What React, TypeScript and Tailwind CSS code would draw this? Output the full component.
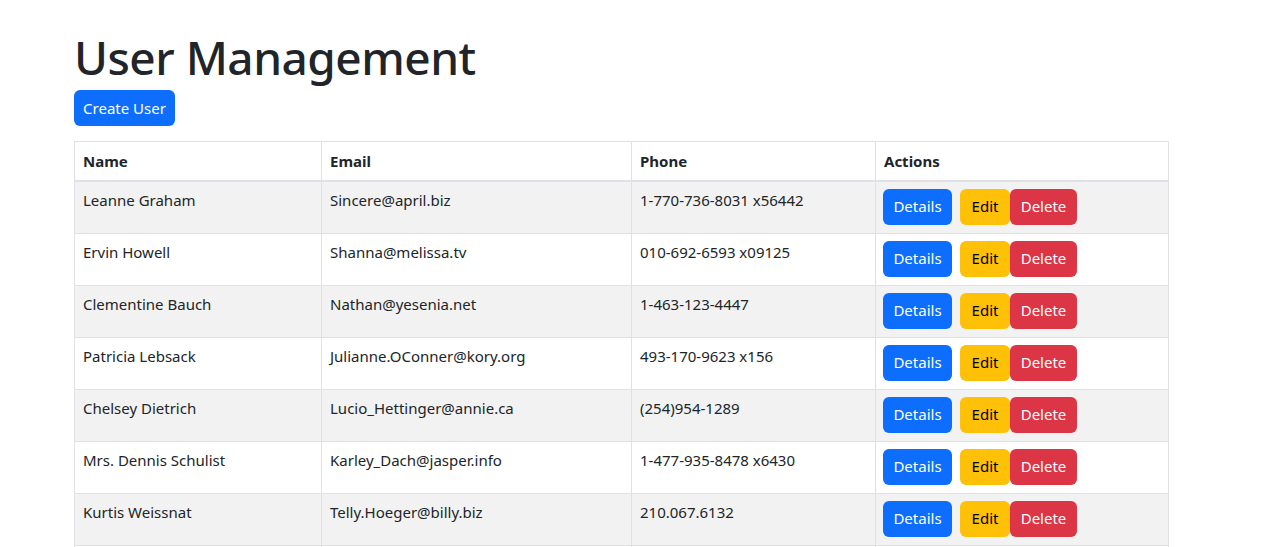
import React from "react";

const users = [
  { name: "Leanne Graham", email: "Sincere@april.biz", phone: "1-770-736-8031 x56442" },
  { name: "Ervin Howell", email: "Shanna@melissa.tv", phone: "010-692-6593 x09125" },
  { name: "Clementine Bauch", email: "Nathan@yesenia.net", phone: "1-463-123-4447" },
  { name: "Patricia Lebsack", email: "Julianne.OConner@kory.org", phone: "493-170-9623 x156" },
  { name: "Chelsey Dietrich", email: "Lucio_Hettinger@annie.ca", phone: "(254)954-1289" },
  { name: "Mrs. Dennis Schulist", email: "Karley_Dach@jasper.info", phone: "1-477-935-8478 x6430" },
  { name: "Kurtis Weissnat", email: "Telly.Hoeger@billy.biz", phone: "210.067.6132" },
  { name: "Nicholas Runolfsdottir V", email: "Sherwood@rosamond.me", phone: "586.493.6943 x140" },
  { name: "Glenna Reichert", email: "Chaim_McDermott@dana.io", phone: "(775)976-6794 x41206" },
  { name: "Clementina DuBuque", email: "Rey.Padberg@karina.biz", phone: "024-648-3804" },
];

export default function App() {
  return (
    <div
      className="min-h-screen bg-white text-[#212529] text-[16px]"
      style={{ fontFamily: '"Noto Sans", "Open Sans", sans-serif' }}
    >
      <div className="pl-[74px] pt-[30px] w-[1169px]">
        <h1 className="text-[46px] font-medium leading-[1.2] mb-[5px] tracking-[-0.5px]">User Management</h1>
        <button className="h-9 w-[101px] rounded-md bg-[#0d6efd] text-white text-[15px]">Create User</button>

        <table className="mt-[15px] w-[1095px] table-fixed border-collapse border border-[#dee2e6] text-[15px]">
          <thead>
            <tr className="border-b-2 border-[#dee2e6]">
              <th className="w-[247px] border border-[#dee2e6] px-2 h-[39px] text-left font-bold">Name</th>
              <th className="w-[310px] border border-[#dee2e6] px-2 text-left font-bold">Email</th>
              <th className="w-[244px] border border-[#dee2e6] px-2 text-left font-bold">Phone</th>
              <th className="border border-[#dee2e6] px-2 text-left font-bold">Actions</th>
            </tr>
          </thead>
          <tbody>
            {users.map((u, i) => (
              <tr key={u.email} className={i % 2 === 0 ? "bg-[#f2f2f2]" : "bg-white"}>
                <td className="border border-[#dee2e6] px-2 pt-[7px] align-top">{u.name}</td>
                <td className="border border-[#dee2e6] px-2 pt-[7px] align-top">{u.email}</td>
                <td className="border border-[#dee2e6] px-2 pt-[7px] align-top">{u.phone}</td>
                <td className="border border-[#dee2e6] pl-[7px] pr-2 pt-[7px] pb-2 align-top">
                  <div className="flex items-center">
                    <button className="h-9 w-[69px] rounded-md bg-[#0d6efd] text-white mr-2">Details</button>
                    <button className="h-9 w-[50px] rounded-md bg-[#ffc107] text-black">Edit</button>
                    <button className="h-9 w-[67px] rounded-md bg-[#dc3545] text-white">Delete</button>
                  </div>
                </td>
              </tr>
            ))}
          </tbody>
        </table>
      </div>
    </div>
  );
}
